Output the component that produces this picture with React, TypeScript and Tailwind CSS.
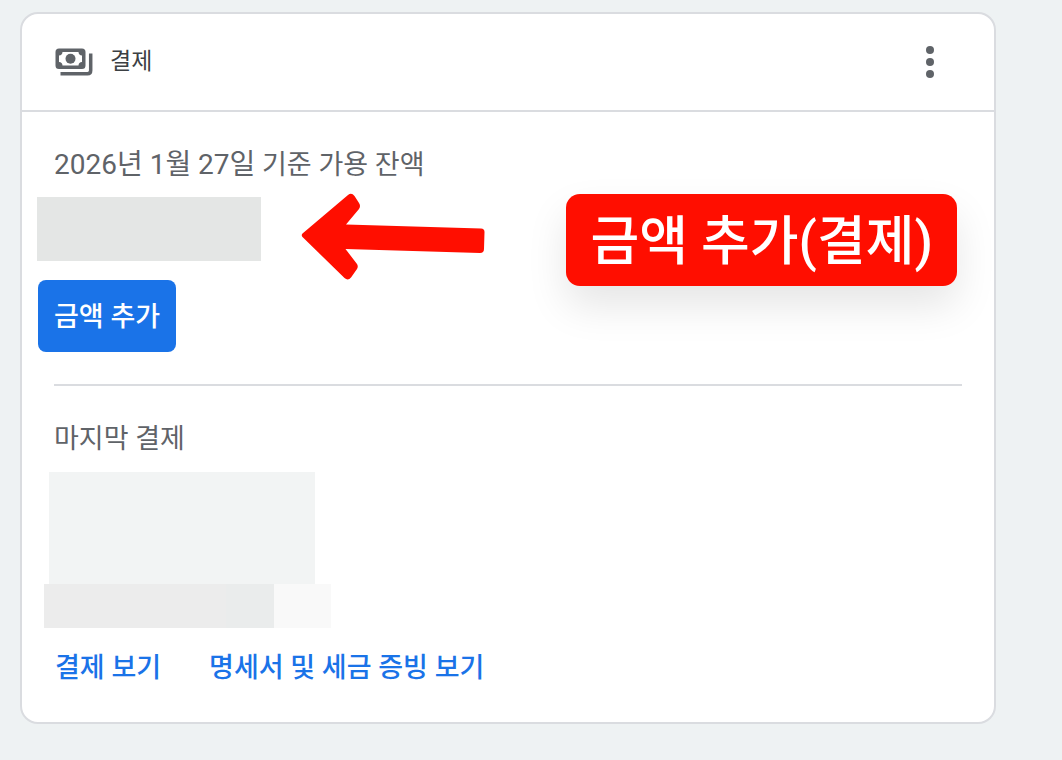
const LINKS = [
  { href: "#payments", title: "결제 보기" },
  { href: "#documents", title: "명세서 및 세금 증빙 보기" },
];

function PaymentsIcon() {
  return (
    <svg
      aria-hidden="true"
      className="w-10 h-7 text-[#5f6368]"
      viewBox="0 0 40 28"
      fill="none"
      stroke="currentColor"
    >
      <path
        fill="currentColor"
        fillRule="evenodd"
        stroke="none"
        d="M5 0.500H28Q31.500 0.500 31.500 4V17.500Q31.500 21 28 21H5Q1.500 21 1.500 17.500V4Q1.500 0.500 5 0.500Z M8.500 4Q8.300 7.200 5 7.500V14Q8.300 14.200 8.500 17.500H24.500Q24.700 14.200 28 14V7.500Q24.700 7.200 24.500 4Z"
      />
      <circle cx="16.500" cy="10.700" r="5" fill="currentColor" stroke="none" />
      <path strokeWidth="3.500" d="M36.700 5.500V22.500Q36.700 25.700 33.500 25.700H6.500" />
    </svg>
  );
}

function MoreIcon() {
  return (
    <svg className="w-10 h-12" viewBox="0 0 40 48" fill="currentColor">
      <circle cx="20" cy="12" r="4" />
      <circle cx="20" cy="24" r="4" />
      <circle cx="20" cy="36" r="4" />
    </svg>
  );
}

function Arrow() {
  return (
    <svg
      aria-hidden="true"
      className="absolute left-[264px] -top-1 w-[184px] h-[88px]"
      viewBox="0 0 184 88"
      fill="#ff0e00"
    >
      <path d="M1.500 40.500 L47 2 Q50.500 -1 53.500 3 L58 10 Q60 13 58 16 L45 31.500 L180 35.500 Q183.500 35.700 183.500 39 L183 56 Q183 60 179 60 L44.500 56 L56 71 Q57.500 73.500 56 76 L50 84.500 Q47 88 43.500 85 L1.500 44 Q0 42 1.500 40.500 Z" />
    </svg>
  );
}

function Header() {
  return (
    <header className="h-[98px] pl-8 pr-11 flex items-center border-b-2 border-[#dadce0]">
      <PaymentsIcon />
      <h1 className="ml-4 text-[23px] text-[#3c4043]">결제</h1>
      <button type="button" aria-label="더보기" className="ml-auto text-[#5f6368]">
        <MoreIcon />
      </button>
    </header>
  );
}

export default function App() {
  return (
    <main className="min-h-screen bg-[#eef2f3] pt-3 pl-5 pr-[66px] pb-9 font-[Roboto,'Noto_Sans_CJK_KR',sans-serif]">
      <div className="bg-white border-2 border-[#dadce0] rounded-[18px]">
        <Header />

        <section className="pt-[33px] px-8 text-[27px] leading-10">
          <h2 className="text-[#5f6368]">
            <time dateTime="2026-01-27" className="text-[28px]">
              2026년 1월 27일
            </time>{" "}
            기준 가용 잔액
          </h2>

          <div className="relative mt-3 -mx-[17px]">
            <div className="w-56 h-16 bg-[#e4e6e5]" />
            <Arrow />
            <strong className="absolute right-[22px] -top-[3px] h-[92px] px-6 pt-1 flex items-center rounded-[14px] bg-[#ff0e00] text-white text-[53px] font-medium whitespace-nowrap shadow-[0_20px_40px_rgba(0,0,0,0.1)]">
              금액 추가(결제)
            </strong>
          </div>

          <button
            type="button"
            className="mt-[19px] -ml-4 h-[72px] px-4 pt-0.5 rounded-lg bg-[#1a73e8] text-white font-medium"
          >
            금액 추가
          </button>

          <hr className="mt-8 border-t-2 border-[#dadce0]" />
        </section>

        <section className="pt-[33px] px-8 pb-[34px] text-[27px] leading-10">
          <h2 className="text-[#5f6368]">마지막 결제</h2>

          <div className="mt-[13px]">
            <div className="-ml-[5px] w-[266px] h-28 bg-[#f2f4f4]" />
            <div className="-ml-2.5 flex h-11">
              <div className="w-[182px] bg-[#ececec]" />
              <div className="w-12 bg-[#eaecec]" />
              <div className="w-[57px] bg-[#f9f9f9]" />
            </div>
          </div>

          <nav className="mt-5 ml-px flex gap-12">
            {LINKS.map((e) => (
              <a key={e.href} href={e.href} className="text-[#1a73e8] font-medium">
                {e.title}
              </a>
            ))}
          </nav>
        </section>
      </div>
    </main>
  );
}
